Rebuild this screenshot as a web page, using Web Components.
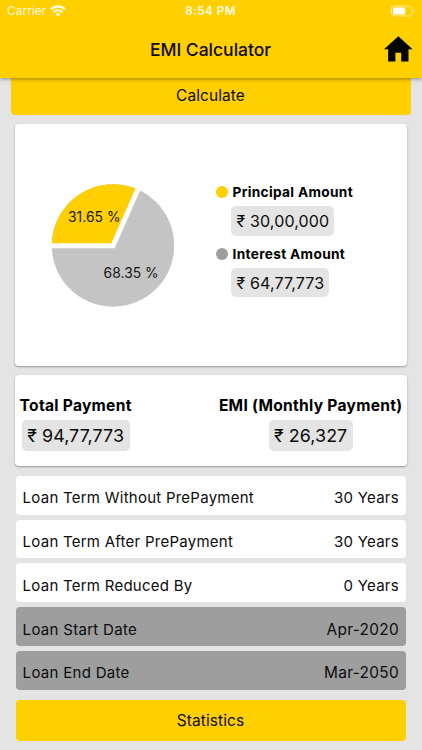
<!DOCTYPE html>
<html lang="en">
<head>
<meta charset="utf-8">
<meta name="viewport" content="width=device-width, initial-scale=1">
<title>EMI Calculator</title>
<style>
  html, body {
    height: 100%;
    margin: 0;
  }
  body {
    background: #e4e4e4;
    font-family: Inter, "Noto Sans", sans-serif;
    color: #0c0c0c;
    overflow: hidden;
    --yellow: #ffcf00;
    --grey: #9e9e9e;
    --chip: #e4e4e4;
  }
</style>
</head>
<body>
<emi-app>
  <status-bar slot="top" carrier="Carrier" time="8:54 PM"></status-bar>
  <app-bar slot="top">EMI Calculator</app-bar>

  <action-button class="first">Calculate</action-button>
  <info-card class="chart">
    <pie-chart first="31.65 %" second="68.35 %"></pie-chart>
    <div class="legend">
      <legend-item label="Principal Amount" value="₹ 30,00,000" color="var(--yellow)"></legend-item>
      <legend-item label="Interest Amount" value="₹ 64,77,773" color="var(--grey)"></legend-item>
    </div>
  </info-card>
  <info-card class="totals">
    <total-box label="Total Payment" value="₹ 94,77,773"></total-box>
    <total-box label="EMI (Monthly Payment)" value="₹ 26,327"></total-box>
  </info-card>
  <div class="rows">
    <loan-row value="30 Years">Loan Term Without PrePayment</loan-row>
    <loan-row value="30 Years">Loan Term After PrePayment</loan-row>
    <loan-row value="0 Years">Loan Term Reduced By</loan-row>
    <loan-row class="dark" value="Apr-2020">Loan Start Date</loan-row>
    <loan-row class="dark" value="Mar-2050">Loan End Date</loan-row>
  </div>
  <action-button class="last">Statistics</action-button>
</emi-app>

<script>
class EmiApp extends HTMLElement {
  connectedCallback() {
    this.attachShadow({ mode: "open" }).innerHTML = `
      <style>
        :host {
          display: flex;
          flex-direction: column;
          height: 750px;
        }
        header {
          position: relative;
          z-index: 1;
          height: 77.5px;
          background: var(--yellow);
          box-shadow: 0 1px 4px rgba(0, 0, 0, 0.4);
        }
        main {
          display: flex;
          flex-direction: column;
        }
        ::slotted(.first) {
          height: 40px;
          margin: -2.5px 11px 0;
        }
        ::slotted(.chart) {
          height: 242px;
          margin: 9.3px 14.6px 0;
        }
        ::slotted(.totals) {
          height: 91px;
          margin: 8.5px 14.6px 0;
        }
        ::slotted(.rows) {
          display: flex;
          flex-direction: column;
          gap: 5px;
          margin: 10px 15.6px 0;
        }
        ::slotted(.last) {
          height: 41px;
          margin: 9.8px 15.6px 0;
        }
      </style>
      <header><slot name="top"></slot></header>
      <main><slot></slot></main>`;
  }
}

class StatusBar extends HTMLElement {
  connectedCallback() {
    this.attachShadow({ mode: "open" }).innerHTML = `
      <style>
        :host {
          display: grid;
          grid-template-columns: 1fr auto 1fr;
          align-items: center;
          height: 22px;
          padding: 0 8px 0 7px;
          color: #fffbe6;
          font-size: 11.8px;
        }
        .left {
          display: flex;
          align-items: center;
          gap: 4px;
        }
        .carrier { letter-spacing: 0.1px; }
        .time {
          font-size: 11.6px;
          font-weight: 600;
          letter-spacing: 0.5px;
        }
        svg { display: block; }
        .battery { justify-self: end; }
      </style>
      <span class="left">
        <span class="carrier">${this.getAttribute("carrier")}</span>
        <svg width="16" height="12" viewBox="0 0 16 12" fill="none" stroke="#fffbe6" stroke-width="2.3">
          <path d="M1 4.2a10 10 0 0 1 14 0"/>
          <path d="M3.6 7.1a6.3 6.3 0 0 1 8.8 0"/>
          <path d="M8 11.6 5.6 9.2a3.5 3.5 0 0 1 4.8 0z" fill="#fffbe6" stroke="none"/>
        </svg>
      </span>
      <span class="time">${this.getAttribute("time")}</span>
      <svg class="battery" width="23" height="12" viewBox="0 0 23 12">
        <rect x=".5" y="1" width="20.4" height="10" rx="2.4" fill="none" stroke="#ffeb99"/>
        <rect x="2" y="2.5" width="12.2" height="7" rx="1" fill="#fff"/>
        <path d="M21.8 4.2q1.2.5 1.2 1.8t-1.2 1.8z" fill="#ffeb99"/>
      </svg>`;
  }
}

class AppBar extends HTMLElement {
  connectedCallback() {
    this.attachShadow({ mode: "open" }).innerHTML = `
      <style>
        :host {
          display: grid;
          grid-template-columns: 1fr auto 1fr;
          align-items: center;
          height: 55.5px;
          padding: 0 8px 0 7px;
        }
        h1 {
          grid-column: 2;
          margin: 0;
          font-size: 17.5px;
          font-weight: 500;
        }
        svg {
          display: block;
          justify-self: end;
          margin: -2px 1px 0 0;
        }
      </style>
      <h1><slot></slot></h1>
      <svg width="29" height="26" viewBox="0 0 29 26">
        <path d="M14.3 .3 28.6 13.2h-4.1v12.3h-7.3v-8.8h-5.8v8.8H4.1V13.2H0z" fill="#050500"/>
      </svg>`;
  }
}

class ActionButton extends HTMLElement {
  connectedCallback() {
    this.attachShadow({ mode: "open" }).innerHTML = `
      <style>
        :host { display: block; }
        button {
          width: 100%;
          height: 100%;
          padding: 0 1px 0 0;
          border: 0;
          border-radius: 4px;
          background: var(--yellow);
          color: inherit;
          font: 15.4px Inter, "Noto Sans", sans-serif;
          letter-spacing: 0.12px;
        }
      </style>
      <button><slot></slot></button>`;
  }
}

class InfoCard extends HTMLElement {
  connectedCallback() {
    this.attachShadow({ mode: "open" }).innerHTML = `
      <style>
        :host {
          display: flex;
          box-sizing: border-box;
          border-radius: 4px;
          background: #fff;
          box-shadow: 0 1px 2px rgba(0, 0, 0, 0.35);
        }
        :host(.chart) {
          align-items: flex-start;
          padding: 58.7px 0 0 36.4px;
        }
        :host(.totals) {
          justify-content: space-between;
          padding: 20px 5px 0 5px;
        }
        ::slotted(.legend) {
          display: flex;
          flex-direction: column;
          gap: 9px;
          margin: 0.3px 0 0 41px;
        }
      </style>
      <slot></slot>`;
  }
}

class PieChart extends HTMLElement {
  connectedCallback() {
    this.attachShadow({ mode: "open" }).innerHTML = `
      <style>
        :host { display: block; }
        svg { display: block; }
        text {
          font-size: 13.8px;
          letter-spacing: 0.05px;
          fill: #151515;
        }
      </style>
      <svg width="124" height="125" viewBox="0 0 124 125">
        <circle cx="62" cy="62.5" r="61.2" fill="#c4c4c4"/>
        <path d="M62 62.5H.8A61.2 61.2 0 0 1 86.8 6.5z" fill="var(--yellow)"/>
        <path d="M-2 62.7H62L88.6 2.5" fill="none" stroke="#fff" stroke-width="5"/>
        <text x="17" y="38.6">${this.getAttribute("first")}</text>
        <text x="52.6" y="95">${this.getAttribute("second")}</text>
      </svg>`;
  }
}

class ValueChip extends HTMLElement {
  connectedCallback() {
    this.attachShadow({ mode: "open" }).innerHTML = `
      <style>
        :host {
          display: flex;
          align-items: center;
          border-radius: 5px;
          background: var(--chip);
          white-space: nowrap;
        }
      </style>
      <slot></slot>`;
  }
}

class LegendItem extends HTMLElement {
  connectedCallback() {
    this.attachShadow({ mode: "open" }).innerHTML = `
      <style>
        :host {
          display: grid;
          grid-template-columns: 12px auto;
          justify-content: start;
          column-gap: 3.5px;
        }
        .dot {
          width: 12px;
          height: 12px;
          margin-top: 3px;
          border-radius: 50%;
        }
        b {
          height: 23px;
          padding-left: 1px;
          color: #000;
          font-size: 13.7px;
          font-weight: 700;
          line-height: 18px;
          letter-spacing: 0.32px;
          white-space: nowrap;
        }
        value-chip {
          grid-column: 2;
          justify-self: start;
          height: 29.5px;
          padding: 0 5px;
          font-size: 16px;
          letter-spacing: 0.15px;
        }
      </style>
      <span class="dot" style="background: ${this.getAttribute("color")}"></span>
      <b>${this.getAttribute("label")}</b>
      <value-chip>${this.getAttribute("value")}</value-chip>`;
  }
}

class TotalBox extends HTMLElement {
  connectedCallback() {
    this.attachShadow({ mode: "open" }).innerHTML = `
      <style>
        :host {
          display: flex;
          flex-direction: column;
          align-items: center;
        }
        b {
          height: 25px;
          color: #000;
          font-size: 15.6px;
          font-weight: 700;
          line-height: 21px;
          letter-spacing: 0.27px;
        }
        value-chip {
          height: 31px;
          padding: 0 5.5px;
          font-size: 17.9px;
          letter-spacing: 0.05px;
        }
      </style>
      <b>${this.getAttribute("label")}</b>
      <value-chip>${this.getAttribute("value")}</value-chip>`;
  }
}

class LoanRow extends HTMLElement {
  connectedCallback() {
    this.attachShadow({ mode: "open" }).innerHTML = `
      <style>
        :host {
          display: flex;
          justify-content: space-between;
          align-items: center;
          box-sizing: border-box;
          height: 38.8px;
          padding: 5px 7.5px 0 7px;
          border-radius: 4px;
          background: #fff;
          font-size: 15px;
          letter-spacing: 0.25px;
        }
        :host(.dark) {
          background: var(--grey);
          letter-spacing: 0.3px;
        }
        :host(.dark) .value {
          font-size: 15.4px;
        }
      </style>
      <span><slot></slot></span>
      <span class="value">${this.getAttribute("value")}</span>`;
  }
}

customElements.define("value-chip", ValueChip);
customElements.define("legend-item", LegendItem);
customElements.define("total-box", TotalBox);
customElements.define("loan-row", LoanRow);
customElements.define("pie-chart", PieChart);
customElements.define("info-card", InfoCard);
customElements.define("action-button", ActionButton);
customElements.define("app-bar", AppBar);
customElements.define("status-bar", StatusBar);
customElements.define("emi-app", EmiApp);
</script>
</body>
</html>
